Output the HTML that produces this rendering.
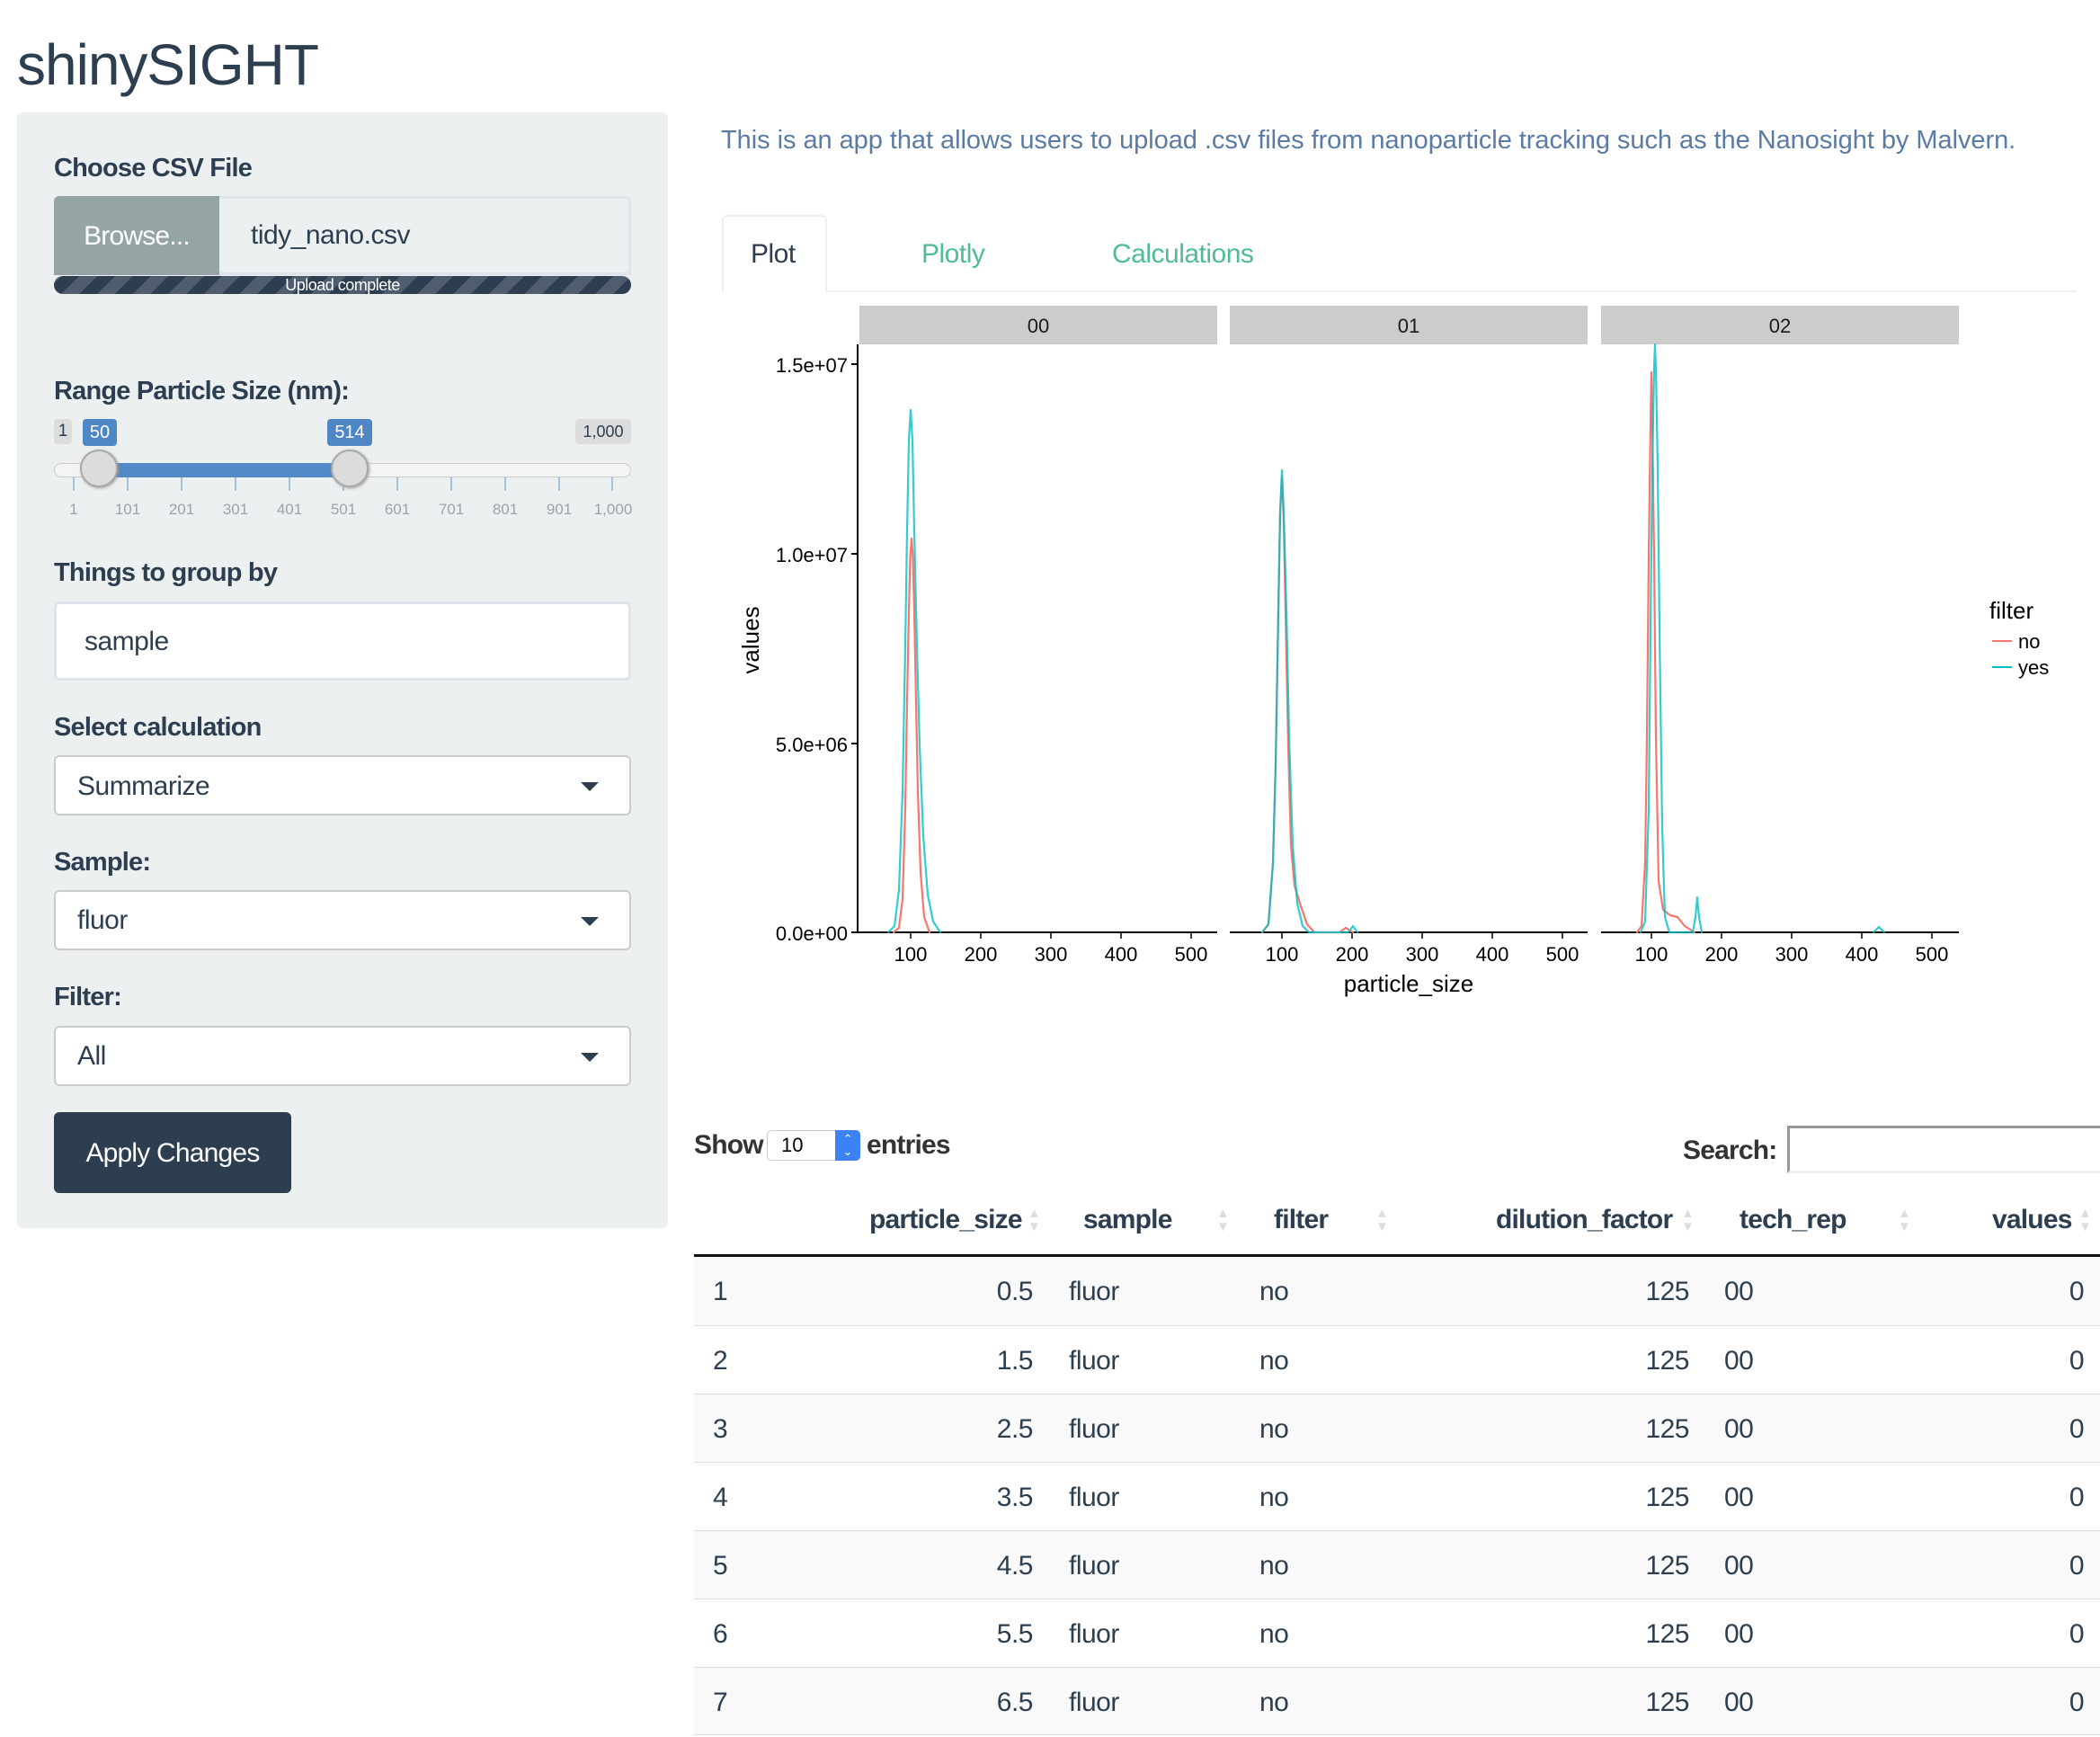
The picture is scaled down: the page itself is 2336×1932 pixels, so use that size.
<!DOCTYPE html>
<html><head><meta charset="utf-8"><style>
*{box-sizing:border-box;margin:0;padding:0}
body{width:2336px;height:1932px;overflow:hidden;background:#fff;font-family:"Liberation Sans",sans-serif;color:#2c3e50;position:relative}
.a{position:absolute;white-space:nowrap}
.lbl{font-weight:bold;font-size:29px;letter-spacing:-0.8px;color:#2c3e50}
.box{position:absolute;background:#fff;border:2px solid #ccc;border-radius:6px}
.sel{font-size:30px;letter-spacing:-0.5px;color:#2c3e50}
.caret{position:absolute;right:34px;top:28px;width:0;height:0;border-left:10px solid transparent;border-right:10px solid transparent;border-top:10px solid #2c3e50}
.tk{position:absolute;width:2px;background:#a8c1dd}
.tl{position:absolute;font-size:17px;color:#9aa3ab;transform:translateX(-50%)}
.row{position:absolute;left:772px;width:1564px;height:76px;border-top:1px solid #ddd;font-size:30px;letter-spacing:-0.5px}
.row span{position:absolute;top:22px}
.hd{position:absolute;top:1340px;font-size:30px;font-weight:bold;letter-spacing:-0.8px}
.sort{position:absolute;top:1342px;font-size:15px;line-height:15px;color:#ddd}
</style></head><body>
<div class="a" style="left:19px;top:35px;font-size:64px;letter-spacing:-1px;color:#2c3e50">shinySIGHT</div>

<div class="a" style="left:19px;top:125px;width:724px;height:1241px;background:#ecf0f1;border-radius:6px"></div>
<div class="a lbl" style="left:60px;top:171px">Choose CSV File</div>
<div class="a" style="left:60px;top:218px;width:642px;height:88px;background:#ecf0f1;border:3px solid #dee4ea;border-radius:6px 6px 0 0"></div>
<div class="a" style="left:60px;top:218px;width:184px;height:88px;background:#95a5a6;border-radius:6px 0 0 0;color:#fff;font-size:30px;line-height:90px;text-align:center;letter-spacing:-0.8px">Browse...</div>
<div class="a" style="left:279px;top:245px;font-size:30px;letter-spacing:-0.5px">tidy_nano.csv</div>
<div class="a" style="left:60px;top:307px;width:642px;height:20px;border-radius:10px;background:repeating-linear-gradient(-45deg,#2c3e50 0 14px,#4f5d6e 14px 28px);color:#fff;font-size:18px;line-height:20px;text-align:center;letter-spacing:-0.5px">Upload complete</div>

<div class="a lbl" style="left:60px;top:419px">Range Particle Size (nm):</div>
<div class="a" style="left:60px;top:466px;width:20px;height:28px;background:#ddd;border-radius:4px;font-size:19px;text-align:center;line-height:28px">1</div>
<div class="a" style="left:92px;top:466px;width:38px;height:30px;background:#4f87c6;border-radius:4px;color:#fff;font-size:20px;text-align:center;line-height:30px">50</div>
<div class="a" style="left:364px;top:466px;width:50px;height:30px;background:#4f87c6;border-radius:4px;color:#fff;font-size:20px;text-align:center;line-height:30px">514</div>
<div class="a" style="left:640px;top:466px;width:62px;height:28px;background:#ddd;border-radius:4px;font-size:18px;text-align:center;line-height:28px">1,000</div>
<div class="a" style="left:60px;top:515px;width:642px;height:16px;background:#f4f4f4;border:1px solid #ccc;border-radius:8px"></div>
<div class="a" style="left:108px;top:515px;width:282px;height:16px;background:#5289c6"></div>
<div class="tk" style="left:81px;top:531px;height:15px"></div><div class="tk" style="left:141px;top:531px;height:15px"></div><div class="tk" style="left:201px;top:531px;height:15px"></div><div class="tk" style="left:261px;top:531px;height:15px"></div><div class="tk" style="left:321px;top:531px;height:15px"></div><div class="tk" style="left:381px;top:531px;height:15px"></div><div class="tk" style="left:441px;top:531px;height:15px"></div><div class="tk" style="left:501px;top:531px;height:15px"></div><div class="tk" style="left:561px;top:531px;height:15px"></div><div class="tk" style="left:621px;top:531px;height:15px"></div><div class="tk" style="left:680px;top:531px;height:15px"></div>
<div class="tl" style="left:82px;top:557px">1</div><div class="tl" style="left:142px;top:557px">101</div><div class="tl" style="left:202px;top:557px">201</div><div class="tl" style="left:262px;top:557px">301</div><div class="tl" style="left:322px;top:557px">401</div><div class="tl" style="left:382px;top:557px">501</div><div class="tl" style="left:442px;top:557px">601</div><div class="tl" style="left:502px;top:557px">701</div><div class="tl" style="left:562px;top:557px">801</div><div class="tl" style="left:622px;top:557px">901</div><div class="tl" style="left:682px;top:557px">1,000</div>
<div class="a" style="left:89px;top:500px;width:42px;height:42px;border-radius:50%;background:#dcdcdc;border:2px solid #aaa;box-shadow:1px 1px 3px #999"></div>
<div class="a" style="left:368px;top:500px;width:42px;height:42px;border-radius:50%;background:#dcdcdc;border:2px solid #aaa;box-shadow:1px 1px 3px #999"></div>

<div class="a lbl" style="left:60px;top:621px">Things to group by</div>
<div class="box" style="left:60px;top:669px;width:642px;height:88px;border:3px solid #dee4ea"></div>
<div class="a sel" style="left:94px;top:697px">sample</div>

<div class="a lbl" style="left:60px;top:793px">Select calculation</div>
<div class="box" style="left:60px;top:840px;width:642px;height:67px"><div class="caret"></div></div>
<div class="a sel" style="left:86px;top:858px">Summarize</div>
<div class="a lbl" style="left:60px;top:943px">Sample:</div>
<div class="box" style="left:60px;top:990px;width:642px;height:67px"><div class="caret"></div></div>
<div class="a sel" style="left:86px;top:1007px">fluor</div>
<div class="a lbl" style="left:60px;top:1093px">Filter:</div>
<div class="box" style="left:60px;top:1141px;width:642px;height:67px"><div class="caret"></div></div>
<div class="a sel" style="left:86px;top:1158px">All</div>
<div class="a" style="left:60px;top:1237px;width:264px;height:90px;background:#2c3e50;border-radius:6px;color:#fff;font-size:30px;line-height:92px;text-align:center;letter-spacing:-0.8px">Apply Changes</div>

<div class="a" style="left:802px;top:140px;font-size:29px;color:#5a7ba3;letter-spacing:-0.05px">This is an app that allows users to upload .csv files from nanoparticle tracking such as the Nanosight by Malvern.</div>

<div class="a" style="left:803px;top:323px;width:1507px;height:2px;background:#ecf0f1"></div>
<div class="a" style="left:803px;top:239px;width:117px;height:86px;background:#fff;border:2px solid #ecf0f1;border-bottom:none;border-radius:6px 6px 0 0"></div>
<div class="a" style="left:835px;top:266px;font-size:30px;letter-spacing:-0.5px">Plot</div>
<div class="a" style="left:1025px;top:266px;font-size:30px;color:#4fbc96;letter-spacing:-0.5px">Plotly</div>
<div class="a" style="left:1237px;top:266px;font-size:30px;color:#4fbc96;letter-spacing:-0.5px">Calculations</div>

<svg class="a" style="left:0;top:0" width="2336" height="1932" font-family="Liberation Sans, sans-serif">
<g fill="#cccccc"><rect x="956" y="340" width="398" height="43"/><rect x="1368" y="340" width="398" height="43"/><rect x="1781" y="340" width="398" height="43"/></g>
<g font-size="22" fill="#1a1a1a" text-anchor="middle"><text x="1155" y="370">00</text><text x="1567" y="370">01</text><text x="1980" y="370">02</text></g>
<g stroke="#000" stroke-width="2"><line x1="954" y1="383" x2="954" y2="1038"/><line x1="954" y1="1037" x2="1354" y2="1037"/><line x1="1368" y1="1037" x2="1766" y2="1037"/><line x1="1781" y1="1037" x2="2179" y2="1037"/>
<line x1="947" y1="405" x2="954" y2="405"/><line x1="947" y1="616" x2="954" y2="616"/><line x1="947" y1="827" x2="954" y2="827"/><line x1="947" y1="1037" x2="954" y2="1037"/></g>
<g stroke="#000" stroke-width="1.5">
<line x1="1013" y1="1037" x2="1013" y2="1044"/><line x1="1091" y1="1037" x2="1091" y2="1044"/><line x1="1169" y1="1037" x2="1169" y2="1044"/><line x1="1247" y1="1037" x2="1247" y2="1044"/><line x1="1325" y1="1037" x2="1325" y2="1044"/>
<line x1="1426" y1="1037" x2="1426" y2="1044"/><line x1="1504" y1="1037" x2="1504" y2="1044"/><line x1="1582" y1="1037" x2="1582" y2="1044"/><line x1="1660" y1="1037" x2="1660" y2="1044"/><line x1="1738" y1="1037" x2="1738" y2="1044"/>
<line x1="1837" y1="1037" x2="1837" y2="1044"/><line x1="1915" y1="1037" x2="1915" y2="1044"/><line x1="1993" y1="1037" x2="1993" y2="1044"/><line x1="2071" y1="1037" x2="2071" y2="1044"/><line x1="2149" y1="1037" x2="2149" y2="1044"/></g>
<g font-size="22" fill="#000" text-anchor="end"><text x="943" y="414">1.5e+07</text><text x="943" y="625">1.0e+07</text><text x="943" y="836">5.0e+06</text><text x="943" y="1046">0.0e+00</text></g>
<g font-size="22" fill="#000" text-anchor="middle">
<text x="1013" y="1069">100</text><text x="1091" y="1069">200</text><text x="1169" y="1069">300</text><text x="1247" y="1069">400</text><text x="1325" y="1069">500</text>
<text x="1426" y="1069">100</text><text x="1504" y="1069">200</text><text x="1582" y="1069">300</text><text x="1660" y="1069">400</text><text x="1738" y="1069">500</text>
<text x="1837" y="1069">100</text><text x="1915" y="1069">200</text><text x="1993" y="1069">300</text><text x="2071" y="1069">400</text><text x="2149" y="1069">500</text>
<text x="1567" y="1103" font-size="26">particle_size</text></g>
<text x="0" y="0" font-size="26" fill="#000" text-anchor="middle" transform="translate(844,712) rotate(-90)">values</text>
<g fill="none" stroke-width="2.2" stroke-linejoin="round" stroke-linecap="round">
<path stroke="#f8766d" d="M994,1037 L1000,1032 L1004,1000 L1007,900 L1009,780 L1011,680 L1012.5,620 L1014,599 L1015.5,620 L1017,680 L1019,780 L1021,880 L1024,970 L1028,1020 L1034,1037"/>
<path stroke="#00bfc4" stroke-opacity=".8" d="M988,1037 L995,1030 L1000,990 L1004,880 L1007,720 L1009,590 L1011,490 L1013,456 L1015,490 L1017,590 L1020,720 L1023,830 L1027,930 L1032,995 L1038,1025 L1046,1037"/>
<path stroke="#f8766d" d="M1404,1037 L1411,1028 L1416,960 L1419,850 L1422,680 L1424,570 L1426,530 L1428,580 L1430,680 L1433,830 L1436,940 L1440,985 L1446,1005 L1454,1028 L1462,1037 L1490,1037 L1497,1032 L1505,1037"/>
<path stroke="#00bfc4" stroke-opacity=".8" d="M1404,1037 L1411,1028 L1416,960 L1419,850 L1422,680 L1424,570 L1426,523 L1428,570 L1431,680 L1434,820 L1438,940 L1443,1005 L1449,1030 L1456,1037 L1500,1037 L1505,1030 L1510,1037"/>
<path stroke="#f8766d" d="M1821,1037 L1826,1030 L1830,960 L1832,820 L1834,620 L1836,470 L1837,414 L1838,470 L1840,620 L1842,820 L1845,980 L1850,1012 L1858,1018 L1866,1020 L1874,1030 L1885,1037"/>
<path stroke="#00bfc4" stroke-opacity=".8" d="M1825,1037 L1830,1025 L1834,900 L1836,700 L1838,520 L1840,410 L1841,383 L1842,410 L1844,520 L1846,700 L1849,920 L1852,1020 L1857,1037 L1883,1037 L1886,1020 L1888,998 L1890,1020 L1893,1037 M2084,1037 L2090,1031 L2096,1037"/>
</g>
<text x="2213" y="688" font-size="26" fill="#000">filter</text>
<line x1="2216" y1="713" x2="2238" y2="713" stroke="#f8766d" stroke-width="2"/><text x="2245" y="721" font-size="22" fill="#000">no</text>
<line x1="2216" y1="742" x2="2238" y2="742" stroke="#00bfc4" stroke-width="2"/><text x="2245" y="750" font-size="22" fill="#000">yes</text>
</svg>

<div class="a" style="left:772px;top:1257px;font-size:30px;font-weight:bold;letter-spacing:-0.8px;color:#333">Show</div>
<div class="a" style="left:853px;top:1257px;width:104px;height:34px;border:1px solid #ccc;border-radius:5px;background:#fff;font-size:22px;line-height:32px;padding-left:15px;color:#000">10</div>
<div class="a" style="left:929px;top:1257px;width:28px;height:34px;background:#3b82f6;border-radius:0 5px 5px 0;color:#fff;font-size:13px;line-height:14px;text-align:center;padding-top:3px">&#8963;<br>&#8964;</div>
<div class="a" style="left:964px;top:1257px;font-size:30px;font-weight:bold;letter-spacing:-0.8px;color:#333">entries</div>
<div class="a" style="left:1872px;top:1263px;font-size:30px;font-weight:bold;letter-spacing:-0.8px;color:#333">Search:</div>
<div class="a" style="left:1988px;top:1252px;width:360px;height:53px;border:3px solid #eee;border-top-color:#999;border-left-color:#999;background:#fff"></div>

<div class="hd" style="left:967px">particle_size</div><div class="sort" style="left:1143px">▲<br>▼</div>
<div class="hd" style="left:1205px">sample</div><div class="sort" style="left:1353px">▲<br>▼</div>
<div class="hd" style="left:1417px">filter</div><div class="sort" style="left:1530px">▲<br>▼</div>
<div class="hd" style="left:1664px">dilution_factor</div><div class="sort" style="left:1870px">▲<br>▼</div>
<div class="hd" style="left:1935px">tech_rep</div><div class="sort" style="left:2111px">▲<br>▼</div>
<div class="hd" style="left:2216px">values</div><div class="sort" style="left:2312px">▲<br>▼</div>
<div class="a" style="left:772px;top:1395px;width:1564px;height:3px;background:#111"></div>

<div class="row" style="top:1398px;background:#f9f9f9;border-top:none"><span style="left:21px">1</span><span style="right:1187px">0.5</span><span style="left:417px">fluor</span><span style="left:629px">no</span><span style="right:457px">125</span><span style="left:1146px">00</span><span style="right:18px">0</span></div>
<div class="row" style="top:1474px"><span style="left:21px">2</span><span style="right:1187px">1.5</span><span style="left:417px">fluor</span><span style="left:629px">no</span><span style="right:457px">125</span><span style="left:1146px">00</span><span style="right:18px">0</span></div>
<div class="row" style="top:1550px;background:#f9f9f9"><span style="left:21px">3</span><span style="right:1187px">2.5</span><span style="left:417px">fluor</span><span style="left:629px">no</span><span style="right:457px">125</span><span style="left:1146px">00</span><span style="right:18px">0</span></div>
<div class="row" style="top:1626px"><span style="left:21px">4</span><span style="right:1187px">3.5</span><span style="left:417px">fluor</span><span style="left:629px">no</span><span style="right:457px">125</span><span style="left:1146px">00</span><span style="right:18px">0</span></div>
<div class="row" style="top:1702px;background:#f9f9f9"><span style="left:21px">5</span><span style="right:1187px">4.5</span><span style="left:417px">fluor</span><span style="left:629px">no</span><span style="right:457px">125</span><span style="left:1146px">00</span><span style="right:18px">0</span></div>
<div class="row" style="top:1778px"><span style="left:21px">6</span><span style="right:1187px">5.5</span><span style="left:417px">fluor</span><span style="left:629px">no</span><span style="right:457px">125</span><span style="left:1146px">00</span><span style="right:18px">0</span></div>
<div class="row" style="top:1854px;background:#f9f9f9;border-bottom:1px solid #ddd"><span style="left:21px">7</span><span style="right:1187px">6.5</span><span style="left:417px">fluor</span><span style="left:629px">no</span><span style="right:457px">125</span><span style="left:1146px">00</span><span style="right:18px">0</span></div>
</body></html>
